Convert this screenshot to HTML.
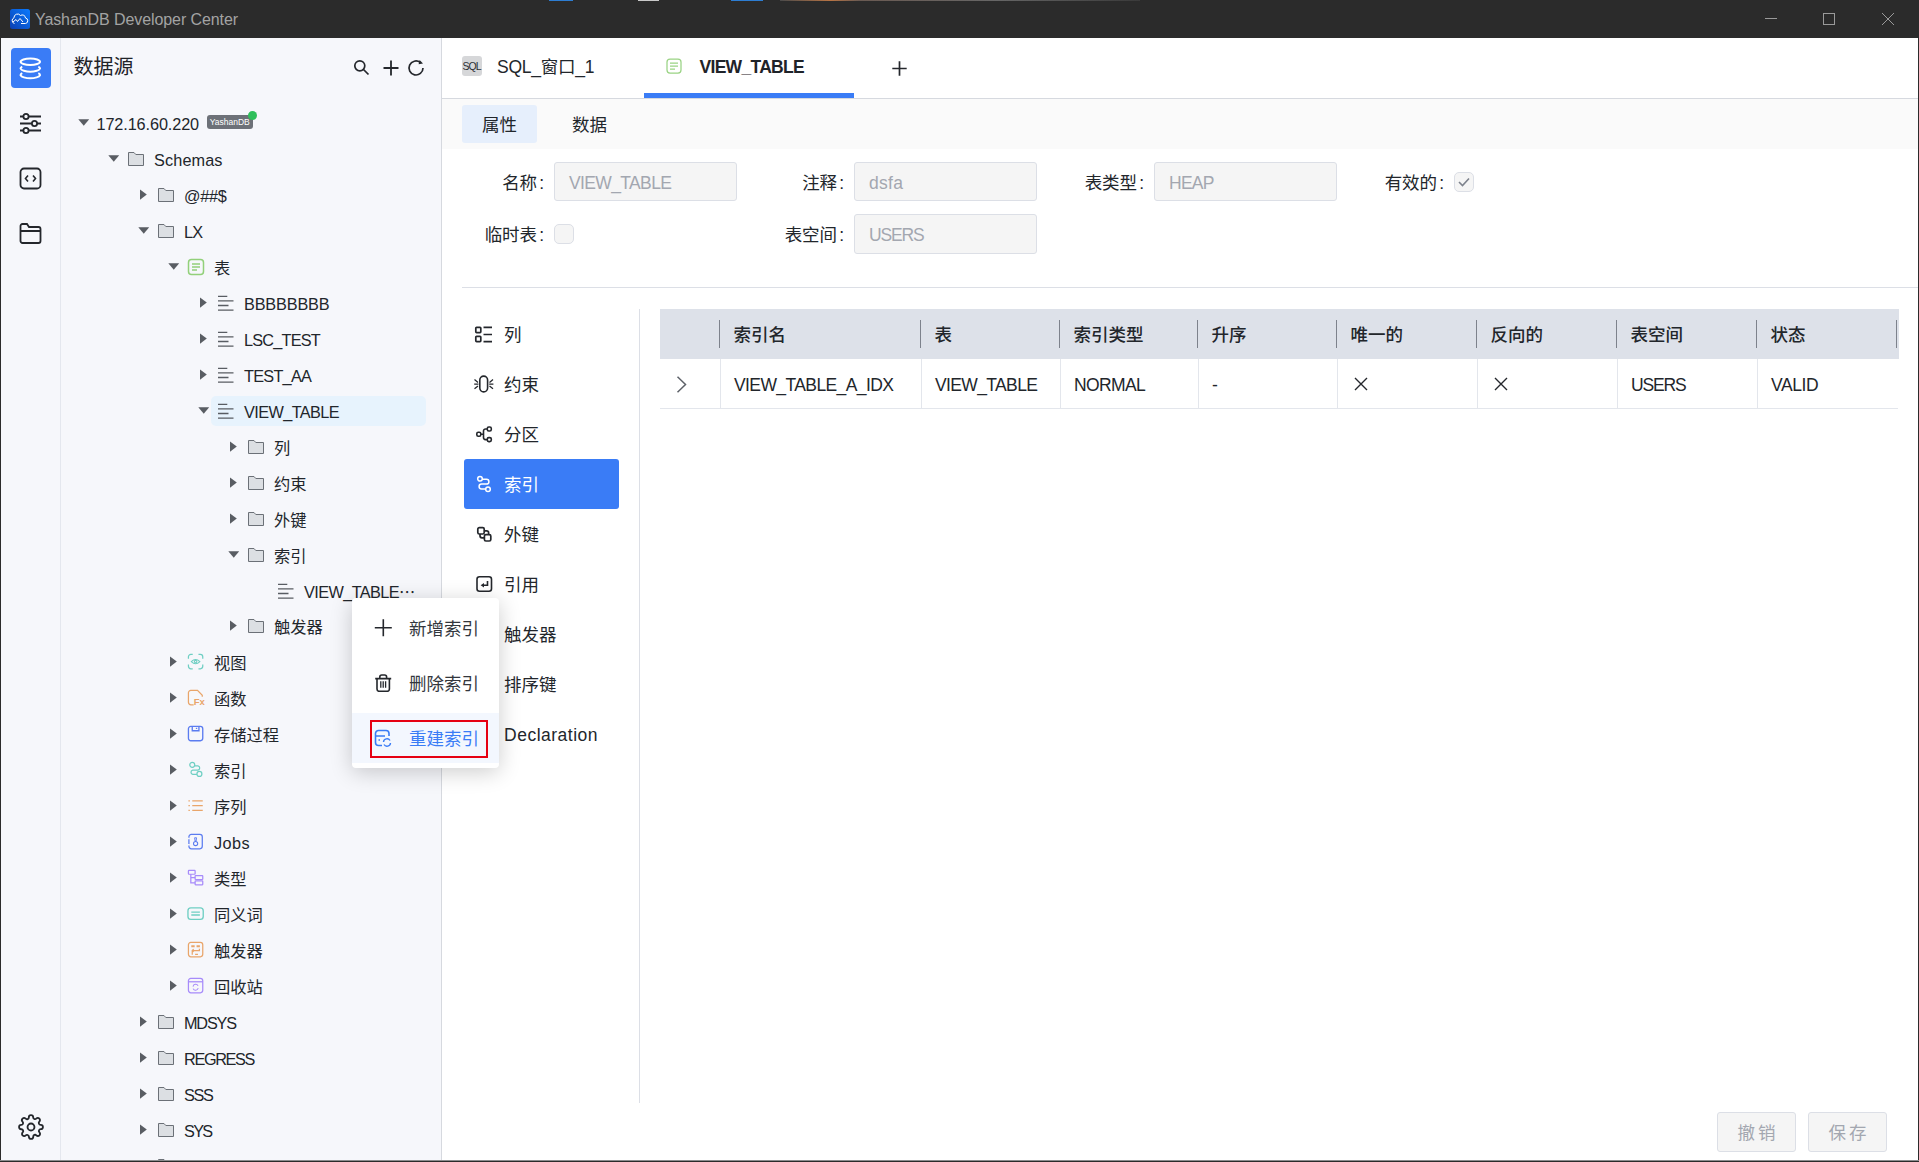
<!DOCTYPE html>
<html lang="zh-CN"><head><meta charset="utf-8"><title>YashanDB Developer Center</title>
<style>
*{box-sizing:border-box;margin:0;padding:0}
html,body{width:1919px;height:1162px;overflow:hidden;background:#fff}
body{font-family:"Liberation Sans","Noto Sans CJK SC",sans-serif;color:#1f2329;position:relative;font-size:16px}
.abs{position:absolute}
#titlebar{left:0;top:0;width:1919px;height:38px;background:#2b2b2b}
#titlebar .t{left:35px;top:0;height:38px;line-height:40px;color:#a3a3a3;font-size:16px;white-space:nowrap}
#strip{left:1px;top:38px;width:60px;height:1123px;background:#f6f7fb;border-right:1px solid #e4e7ee}
#tree{left:61px;top:38px;width:381px;height:1123px;background:#f6f7fb;border-right:1px solid #d6d9df;overflow:hidden}
#main{left:442px;top:38px;width:1476px;height:1123px;background:#fff;overflow:hidden}
.bl{left:0;top:0;width:1px;height:1162px;background:#2b2b2b}
.br{left:1918px;top:0;width:1px;height:1162px;background:#2b2b2b}
.bb{left:0;top:1160px;width:1919px;height:2px;background:linear-gradient(#8b8c8e 0 50%,#2b2b2b 50% 100%)}
.row{position:absolute;left:0;width:380px;height:36px;line-height:39px;font-size:16.25px;white-space:nowrap;color:#22262b}
.row .ar{position:absolute;top:0;width:12px;height:36px}
.row .ic{position:absolute;top:9px;width:18px;height:18px}
.row .ic.sm{top:9.4px;width:17.2px;height:17.2px;margin-left:0.4px}
.row .tx{position:absolute;top:0}
.nav{position:absolute;left:22px;width:155px;height:50px;line-height:53px;font-size:17.5px;color:#22262b;border-radius:3px;white-space:nowrap}
.nav svg{position:absolute;left:10px;top:15.6px;width:20px;height:20px}
.nav span.n{position:absolute;left:40px;top:0}
.nav.on{background:#3a7cf6;color:#fff}
.lbl{position:absolute;height:39px;line-height:42px;font-size:17.5px;text-align:right;color:#22262b;white-space:nowrap}
.lbl b{font-weight:normal;margin-left:2px}
.inp{position:absolute;height:39px;line-height:40px;font-size:17.5px;color:#a3a7b0;background:#f5f5f5;border:1px solid #dcdfe6;border-radius:3px;padding-left:14px;white-space:nowrap}
.cb{position:absolute;width:20px;height:20px;background:#f5f5f5;border:1px solid #dcdfe6;border-radius:5px}
.th{position:absolute;top:0;height:50px;line-height:53px;font-size:17.5px;font-weight:500;color:#22262b;padding-left:13.6px;white-space:nowrap}
.th i{position:absolute;left:0;top:11px;width:1px;height:28px;background:#7d828c}
.td{position:absolute;top:50px;height:50px;line-height:53px;font-size:17.5px;color:#22262b;padding-left:13px;border-left:1px solid #e3e6ec;white-space:nowrap}
.btn{position:absolute;top:1074px;width:79px;height:40px;line-height:41px;text-align:center;font-size:17.5px;color:#a3a7b0;background:#f5f5f5;border:1px solid #dcdfe6;border-radius:3px;letter-spacing:3px;padding-left:3px}
.mi{position:absolute;left:0;width:147px;height:50px;line-height:53px;font-size:17.5px;color:#33373d;white-space:nowrap}
.mi span{position:absolute;left:57px;top:0}
.mi svg{position:absolute;left:22px;top:16px;width:18px;height:18px}
</style></head><body>
<div id="titlebar" class="abs">
<svg class="abs" style="left:10px;top:9px;width:20px;height:20px" viewBox="0 0 20 20"><defs><linearGradient id="lg" x1="1" y1="0" x2="0" y2="1"><stop offset="0" stop-color="#0a7bff"/><stop offset="1" stop-color="#0b3fb0"/></linearGradient></defs><rect width="20" height="20" rx="2.5" fill="url(#lg)"/><path d="M4.5 14.5 A3 3 0 0 1 4 8.8 A3.6 3.6 0 0 1 10.5 6.5 A3.2 3.2 0 0 1 15.5 9 A2.8 2.8 0 0 1 15.5 14.5 H11 M3 13 L6 10.5 L7.5 12.5 L10 9.5 L13 13" fill="none" stroke="#fff" stroke-width="1"/></svg>
<div class="abs" style="left:549px;top:0;width:24px;height:1px;background:#2d7dd2"></div>
<div class="abs" style="left:638px;top:0;width:21px;height:1px;background:#c9c9c9"></div>
<div class="abs" style="left:731px;top:0;width:32px;height:1px;background:#2d7dd2"></div>
<div class="abs" style="left:780px;top:0;width:360px;height:1px;background:linear-gradient(90deg,#4a4a4a,#b87444 14%,#6a5a52 22%,#666 60%,#3a3a3a)"></div>
<div class="abs t"><span style="letter-spacing:-0.086px">YashanDB Developer Center</span></div>
<svg class="abs" style="left:1764px;top:12px;width:14px;height:14px" viewBox="0 0 14 14" stroke="#9a9a9a" stroke-width="1" fill="none"><path d="M1 6.5 H13"/></svg>
<svg class="abs" style="left:1822px;top:12px;width:14px;height:14px" viewBox="0 0 14 14" stroke="#9a9a9a" stroke-width="1" fill="none"><rect x="1.5" y="1.5" width="11" height="11"/></svg>
<svg class="abs" style="left:1881px;top:12px;width:14px;height:14px" viewBox="0 0 14 14" stroke="#9a9a9a" stroke-width="1" fill="none"><path d="M1 1 L13 13 M13 1 L1 13"/></svg>
</div>
<div id="strip" class="abs">
<div class="abs" style="left:10px;top:10px;width:40px;height:40px;border-radius:4px;background:#3a7cf6"></div>
<svg class="abs" style="left:18px;top:18px;width:24px;height:24px" viewBox="0 0 24 24" fill="none" stroke="#fff" stroke-width="2"><ellipse cx="11.3" cy="5.7" rx="9.7" ry="3.2"/><path d="M3.28 10.55 A9.7 3.2 0 1 0 19.32 10.55 M3.28 17.2 A9.7 3.2 0 1 0 19.32 17.2"/></svg>
<svg class="abs" style="left:18px;top:74px;width:23px;height:23px" viewBox="0 0 23 23" fill="none" stroke="#24272c" stroke-width="1.8"><path d="M1 4.5 H4.5 M9.5 4.5 H22 M1 11.5 H13 M18 11.5 H22 M1 18.5 H4.5 M9.5 18.5 H22"/><circle cx="7" cy="4.5" r="2.6"/><circle cx="15.5" cy="11.5" r="2.6"/><circle cx="7" cy="18.5" r="2.6"/></svg>
<svg class="abs" style="left:18px;top:129px;width:23px;height:23px" viewBox="0 0 23 23" fill="none" stroke="#24272c" stroke-width="1.8"><rect x="1.5" y="1.5" width="20" height="20" rx="3.5"/><path d="M9 8.5 L6.5 11.5 L9 14.5 M14 8.5 L16.5 11.5 L14 14.5" stroke-width="1.6"/></svg>
<svg class="abs" style="left:18px;top:184px;width:23px;height:23px" viewBox="0 0 23 23" fill="none" stroke="#24272c" stroke-width="1.8"><path d="M1.5 4 A2 2 0 0 1 3.5 2 H8 L10 5 H19.5 A2 2 0 0 1 21.5 7 V19 A2 2 0 0 1 19.5 21 H3.5 A2 2 0 0 1 1.5 19 Z M1.5 9 H21.5"/></svg>
<svg class="abs" style="left:17px;top:1076px;width:26px;height:26px" viewBox="0 0 24 24" fill="none" stroke="#24272c" stroke-width="1.7" stroke-linejoin="round"><circle cx="12" cy="12" r="3.2"/><path d="M19.4 15a1.65 1.65 0 0 0 .33 1.82l.06.06a2 2 0 1 1-2.83 2.83l-.06-.06a1.65 1.65 0 0 0-1.82-.33 1.65 1.65 0 0 0-1 1.51V21a2 2 0 0 1-4 0v-.09A1.65 1.65 0 0 0 9 19.4a1.65 1.65 0 0 0-1.82.33l-.06.06a2 2 0 1 1-2.83-2.83l.06-.06a1.65 1.65 0 0 0 .33-1.82 1.65 1.65 0 0 0-1.51-1H3a2 2 0 0 1 0-4h.09A1.65 1.65 0 0 0 4.6 9a1.65 1.65 0 0 0-.33-1.82l-.06-.06a2 2 0 1 1 2.83-2.83l.06.06a1.65 1.65 0 0 0 1.82.33H9a1.65 1.65 0 0 0 1-1.51V3a2 2 0 0 1 4 0v.09a1.65 1.65 0 0 0 1 1.51 1.65 1.65 0 0 0 1.82-.33l.06-.06a2 2 0 1 1 2.83 2.83l-.06.06a1.65 1.65 0 0 0-.33 1.82V9a1.65 1.65 0 0 0 1.51 1H21a2 2 0 0 1 0 4h-.09a1.65 1.65 0 0 0-1.51 1z"/></svg>
</div>
<div id="tree" class="abs">
<div class="abs" style="left:12.5px;top:13px;height:30px;line-height:33px;font-size:20px;color:#1f2329;white-space:nowrap">数据源</div>
<svg class="abs" style="left:292px;top:21px;width:17px;height:17px" viewBox="0 0 17 17" fill="none" stroke="#24272c" stroke-width="1.7"><circle cx="6.8" cy="6.8" r="5"/><path d="M10.5 10.5 L15.5 15.5"/></svg>
<svg class="abs" style="left:322px;top:22px;width:16px;height:16px" viewBox="0 0 16 16" fill="none" stroke="#24272c" stroke-width="1.8"><path d="M8 0.5 V15.5 M0.5 8 H15.5"/></svg>
<svg class="abs" style="left:346px;top:21px;width:18px;height:18px" viewBox="0 0 18 18" fill="none" stroke="#24272c" stroke-width="1.5"><path d="M16 9 A7 7 0 1 1 13.2 3.4" stroke-width="1.7"/><path d="M12.6 0.9 L16 4.4 L11.6 5.3 Z" fill="#24272c" stroke="none"/></svg>
<div class="row" style="top:67px"><svg class="ar" style="left:17px" viewBox="0 0 12 36"><path d="M0.3 14.2 L11.2 14.2 L5.75 20.8 Z" fill="#595d63"/></svg><span class="tx" style="left:35.5px"><span style="letter-spacing:-0.109px">172.16.60.220</span></span><span class="abs" style="left:146px;top:9.5px;width:45.5px;height:14px;line-height:15.5px;background:#6d7178;border-radius:3px;color:#fff;font-size:8.5px;text-align:center">YashanDB</span><span class="abs" style="left:187px;top:6px;width:9px;height:9px;border-radius:50%;background:#2fbf5b"></span></div>
<div class="row" style="top:103px"><svg class="ar" style="left:47px" viewBox="0 0 12 36"><path d="M0.3 14.2 L11.2 14.2 L5.75 20.8 Z" fill="#595d63"/></svg><svg class="ic" style="left:66px" viewBox="0 0 18 18"><path d="M1.5 2.5 H7 L8.8 4.5 H16.5 V15.5 H1.5 Z" fill="#dcdfe3" stroke="#6b7077" stroke-width="1"/></svg><span class="tx" style="left:93px"><span style="letter-spacing:0.127px">Schemas</span></span></div>
<div class="row" style="top:139px"><svg class="ar" style="left:77px" viewBox="0 0 12 36"><path d="M2 12.5 L8.8 17.6 L2 22.7 Z" fill="#595d63"/></svg><svg class="ic" style="left:96px" viewBox="0 0 18 18"><path d="M1.5 2.5 H7 L8.8 4.5 H16.5 V15.5 H1.5 Z" fill="#dcdfe3" stroke="#6b7077" stroke-width="1"/></svg><span class="tx" style="left:123px"><span style="letter-spacing:-0.293px">@##$</span></span></div>
<div class="row" style="top:175px"><svg class="ar" style="left:77px" viewBox="0 0 12 36"><path d="M0.3 14.2 L11.2 14.2 L5.75 20.8 Z" fill="#595d63"/></svg><svg class="ic" style="left:96px" viewBox="0 0 18 18"><path d="M1.5 2.5 H7 L8.8 4.5 H16.5 V15.5 H1.5 Z" fill="#dcdfe3" stroke="#6b7077" stroke-width="1"/></svg><span class="tx" style="left:123px"><span style="letter-spacing:-0.875px">LX</span></span></div>
<div class="row" style="top:211px"><svg class="ar" style="left:107px" viewBox="0 0 12 36"><path d="M0.3 14.2 L11.2 14.2 L5.75 20.8 Z" fill="#595d63"/></svg><svg class="ic" style="left:126px" viewBox="0 0 18 18"><rect x="1.5" y="1.5" width="15" height="15" rx="3" fill="none" stroke="#92d07a" stroke-width="1.5"/><path d="M5 6 H13 M5 9 H13 M5 12 H10" stroke="#92d07a" stroke-width="1.4" fill="none"/></svg><span class="tx" style="left:153px">表</span></div>
<div class="row" style="top:247px"><svg class="ar" style="left:137px" viewBox="0 0 12 36"><path d="M2 12.5 L8.8 17.6 L2 22.7 Z" fill="#595d63"/></svg><svg class="ic" style="left:156px" viewBox="0 0 18 18"><path d="M1 2.3 H10.3 M1 6.9 H16.5 M1 11.5 H11.5 M1 16.1 H16.5" stroke="#595d63" stroke-width="1.3" fill="none"/></svg><span class="tx" style="left:183px"><span style="letter-spacing:-0.162px">BBBBBBBB</span></span></div>
<div class="row" style="top:283px"><svg class="ar" style="left:137px" viewBox="0 0 12 36"><path d="M2 12.5 L8.8 17.6 L2 22.7 Z" fill="#595d63"/></svg><svg class="ic" style="left:156px" viewBox="0 0 18 18"><path d="M1 2.3 H10.3 M1 6.9 H16.5 M1 11.5 H11.5 M1 16.1 H16.5" stroke="#595d63" stroke-width="1.3" fill="none"/></svg><span class="tx" style="left:183px"><span style="letter-spacing:-0.783px">LSC_TEST</span></span></div>
<div class="row" style="top:319px"><svg class="ar" style="left:137px" viewBox="0 0 12 36"><path d="M2 12.5 L8.8 17.6 L2 22.7 Z" fill="#595d63"/></svg><svg class="ic" style="left:156px" viewBox="0 0 18 18"><path d="M1 2.3 H10.3 M1 6.9 H16.5 M1 11.5 H11.5 M1 16.1 H16.5" stroke="#595d63" stroke-width="1.3" fill="none"/></svg><span class="tx" style="left:183px"><span style="letter-spacing:-0.734px">TEST_AA</span></span></div>
<div class="row" style="top:355px"><div class="abs" style="left:150px;top:3px;width:215px;height:30px;background:#e7f3fd;border-radius:5px"></div><svg class="ar" style="left:137px" viewBox="0 0 12 36"><path d="M0.3 14.2 L11.2 14.2 L5.75 20.8 Z" fill="#595d63"/></svg><svg class="ic" style="left:156px" viewBox="0 0 18 18"><path d="M1 2.3 H10.3 M1 6.9 H16.5 M1 11.5 H11.5 M1 16.1 H16.5" stroke="#595d63" stroke-width="1.3" fill="none"/></svg><span class="tx" style="left:183px"><span style="letter-spacing:-0.586px">VIEW_TABLE</span></span></div>
<div class="row" style="top:391px"><svg class="ar" style="left:167px" viewBox="0 0 12 36"><path d="M2 12.5 L8.8 17.6 L2 22.7 Z" fill="#595d63"/></svg><svg class="ic" style="left:186px" viewBox="0 0 18 18"><path d="M1.5 2.5 H7 L8.8 4.5 H16.5 V15.5 H1.5 Z" fill="#dcdfe3" stroke="#6b7077" stroke-width="1"/></svg><span class="tx" style="left:213px">列</span></div>
<div class="row" style="top:427px"><svg class="ar" style="left:167px" viewBox="0 0 12 36"><path d="M2 12.5 L8.8 17.6 L2 22.7 Z" fill="#595d63"/></svg><svg class="ic" style="left:186px" viewBox="0 0 18 18"><path d="M1.5 2.5 H7 L8.8 4.5 H16.5 V15.5 H1.5 Z" fill="#dcdfe3" stroke="#6b7077" stroke-width="1"/></svg><span class="tx" style="left:213px">约束</span></div>
<div class="row" style="top:463px"><svg class="ar" style="left:167px" viewBox="0 0 12 36"><path d="M2 12.5 L8.8 17.6 L2 22.7 Z" fill="#595d63"/></svg><svg class="ic" style="left:186px" viewBox="0 0 18 18"><path d="M1.5 2.5 H7 L8.8 4.5 H16.5 V15.5 H1.5 Z" fill="#dcdfe3" stroke="#6b7077" stroke-width="1"/></svg><span class="tx" style="left:213px">外键</span></div>
<div class="row" style="top:499px"><svg class="ar" style="left:167px" viewBox="0 0 12 36"><path d="M0.3 14.2 L11.2 14.2 L5.75 20.8 Z" fill="#595d63"/></svg><svg class="ic" style="left:186px" viewBox="0 0 18 18"><path d="M1.5 2.5 H7 L8.8 4.5 H16.5 V15.5 H1.5 Z" fill="#dcdfe3" stroke="#6b7077" stroke-width="1"/></svg><span class="tx" style="left:213px">索引</span></div>
<div class="row" style="top:535px"><svg class="ic" style="left:216px" viewBox="0 0 18 18"><path d="M1 2.3 H10.3 M1 6.9 H16.5 M1 11.5 H11.5 M1 16.1 H16.5" stroke="#595d63" stroke-width="1.3" fill="none"/></svg><span class="tx" style="left:243px"><span style="letter-spacing:-0.586px">VIEW_TABLE</span>⋯</span></div>
<div class="row" style="top:570px"><svg class="ar" style="left:167px" viewBox="0 0 12 36"><path d="M2 12.5 L8.8 17.6 L2 22.7 Z" fill="#595d63"/></svg><svg class="ic" style="left:186px" viewBox="0 0 18 18"><path d="M1.5 2.5 H7 L8.8 4.5 H16.5 V15.5 H1.5 Z" fill="#dcdfe3" stroke="#6b7077" stroke-width="1"/></svg><span class="tx" style="left:213px">触发器</span></div>
<div class="row" style="top:606px"><svg class="ar" style="left:107px" viewBox="0 0 12 36"><path d="M2 12.5 L8.8 17.6 L2 22.7 Z" fill="#595d63"/></svg><svg class="ic sm" style="left:126px" viewBox="0 0 18 18" fill="none" stroke="#6fcfc3" stroke-width="1.3"><path d="M1.5 6 V4 A2.5 2.5 0 0 1 4 1.5 H6 M12 1.5 H14 A2.5 2.5 0 0 1 16.5 4 V6 M16.5 12 V14 A2.5 2.5 0 0 1 14 16.5 H12 M6 16.5 H4 A2.5 2.5 0 0 1 1.5 14 V12"/><path d="M4.5 9 Q9 4.5 13.5 9 Q9 13.5 4.5 9 Z" stroke-width="1.1"/><circle cx="9" cy="9" r="1.3" stroke-width="1.1"/></svg><span class="tx" style="left:153px">视图</span></div>
<div class="row" style="top:642px"><svg class="ar" style="left:107px" viewBox="0 0 12 36"><path d="M2 12.5 L8.8 17.6 L2 22.7 Z" fill="#595d63"/></svg><svg class="ic sm" style="left:126px" viewBox="0 0 18 18" fill="none" stroke="#e9a56a" stroke-width="1.3"><path d="M7 16.5 H4 A2.5 2.5 0 0 1 1.5 14 V4 A2.5 2.5 0 0 1 4 1.5 H11 L16 6.5 V8"/><text x="7" y="16.8" font-size="10" font-weight="bold" fill="#e9a56a" stroke="none" font-family="Liberation Sans,sans-serif">Fx</text></svg><span class="tx" style="left:153px">函数</span></div>
<div class="row" style="top:678px"><svg class="ar" style="left:107px" viewBox="0 0 12 36"><path d="M2 12.5 L8.8 17.6 L2 22.7 Z" fill="#595d63"/></svg><svg class="ic sm" style="left:126px" viewBox="0 0 18 18" fill="none" stroke="#5b7cf0" stroke-width="1.4"><rect x="1.5" y="1.5" width="15" height="15" rx="2.5"/><path d="M5.5 1.5 V6 H12.5 V1.5 M10 3 V4.2"/></svg><span class="tx" style="left:153px">存储过程</span></div>
<div class="row" style="top:714px"><svg class="ar" style="left:107px" viewBox="0 0 12 36"><path d="M2 12.5 L8.8 17.6 L2 22.7 Z" fill="#595d63"/></svg><svg class="ic sm" style="left:126px" viewBox="0 0 18 18" fill="none" stroke="#6fcfc3" stroke-width="1.3"><circle cx="5.5" cy="4" r="2.6"/><circle cx="13" cy="13.5" r="2.6"/><path d="M8 5 H11.5 A2.3 2.3 0 0 1 11.5 9.5 H6 A2.3 2.3 0 0 0 6 14 H10.4"/></svg><span class="tx" style="left:153px">索引</span></div>
<div class="row" style="top:750px"><svg class="ar" style="left:107px" viewBox="0 0 12 36"><path d="M2 12.5 L8.8 17.6 L2 22.7 Z" fill="#595d63"/></svg><svg class="ic sm" style="left:126px" viewBox="0 0 18 18" fill="none" stroke="#e9a56a" stroke-width="1.3"><path d="M5.5 4 H16.5 M5.5 9 H16.5 M5.5 14 H16.5 M1.5 4 H3 M1.5 9 H3 M1.5 14 H3"/></svg><span class="tx" style="left:153px">序列</span></div>
<div class="row" style="top:786px"><svg class="ar" style="left:107px" viewBox="0 0 12 36"><path d="M2 12.5 L8.8 17.6 L2 22.7 Z" fill="#595d63"/></svg><svg class="ic sm" style="left:126px" viewBox="0 0 18 18" fill="none" stroke="#5b7cf0" stroke-width="1.3"><rect x="2" y="1.5" width="14" height="15" rx="2.5"/><path d="M2 5 V6.5 M2 11.5 V13" stroke="#f6f7fb" stroke-width="2"/><circle cx="9" cy="11" r="2.2" stroke-width="1.1"/><path d="M8 5 H10 L9.5 8.5 H8.5 Z" stroke-width="1"/></svg><span class="tx" style="left:153px"><span style="letter-spacing:0.469px">Jobs</span></span></div>
<div class="row" style="top:822px"><svg class="ar" style="left:107px" viewBox="0 0 12 36"><path d="M2 12.5 L8.8 17.6 L2 22.7 Z" fill="#595d63"/></svg><svg class="ic sm" style="left:126px" viewBox="0 0 18 18" fill="none" stroke="#a78bfa" stroke-width="1.3"><rect x="1.5" y="1.5" width="7" height="4" rx="0.5"/><rect x="8.5" y="7" width="8" height="4" rx="0.5"/><rect x="8.5" y="12.5" width="8" height="4" rx="0.5"/><path d="M4 5.5 V14.5 H8.5 M4 9 H8.5"/></svg><span class="tx" style="left:153px">类型</span></div>
<div class="row" style="top:858px"><svg class="ar" style="left:107px" viewBox="0 0 12 36"><path d="M2 12.5 L8.8 17.6 L2 22.7 Z" fill="#595d63"/></svg><svg class="ic sm" style="left:126px" viewBox="0 0 18 18" fill="none" stroke="#6fcfc3" stroke-width="1.4"><rect x="1" y="3" width="16" height="12" rx="3"/><path d="M4.5 7.5 H13.5 M4.5 10.5 H13.5"/></svg><span class="tx" style="left:153px">同义词</span></div>
<div class="row" style="top:894px"><svg class="ar" style="left:107px" viewBox="0 0 12 36"><path d="M2 12.5 L8.8 17.6 L2 22.7 Z" fill="#595d63"/></svg><svg class="ic sm" style="left:126px" viewBox="0 0 18 18" fill="none" stroke="#e9a56a" stroke-width="1.3"><rect x="1.5" y="1.5" width="15" height="15" rx="2.5"/><path d="M4.5 5.5 H8 M10 5.5 H13.5" stroke-width="2.2"/><path d="M13 8 V10 H5.5 V14.5 M5.5 10 L7 8.7 M5.5 10 L7 11.3 M8.5 14 H11.5"/></svg><span class="tx" style="left:153px">触发器</span></div>
<div class="row" style="top:930px"><svg class="ar" style="left:107px" viewBox="0 0 12 36"><path d="M2 12.5 L8.8 17.6 L2 22.7 Z" fill="#595d63"/></svg><svg class="ic sm" style="left:126px" viewBox="0 0 18 18" fill="none" stroke="#a78bfa" stroke-width="1.3"><rect x="1.5" y="1.5" width="15" height="15" rx="2.5"/><path d="M1.5 5 H16.5"/><path d="M6.3 10 A2.8 2.8 0 0 1 11.6 9.3 M11.7 11.5 A2.8 2.8 0 0 1 6.4 12.2" stroke-width="1.1"/></svg><span class="tx" style="left:153px">回收站</span></div>
<div class="row" style="top:966px"><svg class="ar" style="left:77px" viewBox="0 0 12 36"><path d="M2 12.5 L8.8 17.6 L2 22.7 Z" fill="#595d63"/></svg><svg class="ic" style="left:96px" viewBox="0 0 18 18"><path d="M1.5 2.5 H7 L8.8 4.5 H16.5 V15.5 H1.5 Z" fill="#dcdfe3" stroke="#6b7077" stroke-width="1"/></svg><span class="tx" style="left:123px"><span style="letter-spacing:-1.191px">MDSYS</span></span></div>
<div class="row" style="top:1002px"><svg class="ar" style="left:77px" viewBox="0 0 12 36"><path d="M2 12.5 L8.8 17.6 L2 22.7 Z" fill="#595d63"/></svg><svg class="ic" style="left:96px" viewBox="0 0 18 18"><path d="M1.5 2.5 H7 L8.8 4.5 H16.5 V15.5 H1.5 Z" fill="#dcdfe3" stroke="#6b7077" stroke-width="1"/></svg><span class="tx" style="left:123px"><span style="letter-spacing:-1.337px">REGRESS</span></span></div>
<div class="row" style="top:1038px"><svg class="ar" style="left:77px" viewBox="0 0 12 36"><path d="M2 12.5 L8.8 17.6 L2 22.7 Z" fill="#595d63"/></svg><svg class="ic" style="left:96px" viewBox="0 0 18 18"><path d="M1.5 2.5 H7 L8.8 4.5 H16.5 V15.5 H1.5 Z" fill="#dcdfe3" stroke="#6b7077" stroke-width="1"/></svg><span class="tx" style="left:123px"><span style="letter-spacing:-1.318px">SSS</span></span></div>
<div class="row" style="top:1074px"><svg class="ar" style="left:77px" viewBox="0 0 12 36"><path d="M2 12.5 L8.8 17.6 L2 22.7 Z" fill="#595d63"/></svg><svg class="ic" style="left:96px" viewBox="0 0 18 18"><path d="M1.5 2.5 H7 L8.8 4.5 H16.5 V15.5 H1.5 Z" fill="#dcdfe3" stroke="#6b7077" stroke-width="1"/></svg><span class="tx" style="left:123px"><span style="letter-spacing:-1.688px">SYS</span></span></div>
<div class="row" style="top:1110px"><svg class="ar" style="left:77px" viewBox="0 0 12 36"><path d="M2 12.5 L8.8 17.6 L2 22.7 Z" fill="#595d63"/></svg><svg class="ic" style="left:96px" viewBox="0 0 18 18"><path d="M1.5 2.5 H7 L8.8 4.5 H16.5 V15.5 H1.5 Z" fill="#dcdfe3" stroke="#6b7077" stroke-width="1"/></svg><span class="tx" style="left:123px"></span></div></div>
<div id="main" class="abs">
<div class="abs" style="left:0;top:60px;width:1476px;height:1px;background:#d6d9df"></div>
<div class="abs" style="left:20px;top:18px;width:20px;height:20px;border-radius:3px;background:#d6d7d9;color:#2b2f36;font-size:10.5px;line-height:20px;text-align:center;letter-spacing:-1px;text-indent:-1px">SQL</div>
<div class="abs" style="left:55px;top:10px;height:38px;line-height:39px;font-size:17.5px;color:#22262b;white-space:nowrap"><span style="letter-spacing:-0.252px">SQL_窗口_1</span></div>
<svg class="abs" style="left:224px;top:20px;width:16px;height:16px" viewBox="0 0 16 16" fill="none" stroke="#9ad384" stroke-width="1.25"><rect x="1" y="1" width="14" height="14" rx="3"/><path d="M4 5 H12 M4 8 H12 M4 11 H9"/></svg>
<div class="abs" style="left:257.5px;top:10px;height:38px;line-height:39px;font-size:17.5px;font-weight:bold;color:#1f2329;white-space:nowrap"><span style="letter-spacing:-0.698px">VIEW_TABLE</span></div>
<div class="abs" style="left:202px;top:55px;width:210px;height:5px;background:#3a7cf6"></div>
<svg class="abs" style="left:450px;top:23px;width:15px;height:15px" viewBox="0 0 15 15" fill="none" stroke="#24272c" stroke-width="1.7"><path d="M7.5 0.3 V14.7 M0.3 7.5 H14.7"/></svg>
<div class="abs" style="left:0;top:61px;width:1476px;height:50px;background:#fafafa"></div>
<div class="abs" style="left:20px;top:67px;width:75px;height:38px;line-height:41px;background:#e6effc;border-radius:3px;text-align:center;font-size:17.5px;color:#22262b">属性</div>
<div class="abs" style="left:110px;top:67px;width:75px;height:38px;line-height:41px;text-align:center;font-size:17.5px;color:#22262b">数据</div>
<div class="lbl" style="left:0px;width:102px;top:124px">名称<b>:</b></div>
<div class="inp" style="left:112px;top:124px;width:183px"><span style="letter-spacing:-0.631px">VIEW_TABLE</span></div>
<div class="lbl" style="left:300px;width:102px;top:124px">注释<b>:</b></div>
<div class="inp" style="left:412px;top:124px;width:183px"><span style="letter-spacing:0.281px">dsfa</span></div>
<div class="lbl" style="left:600px;width:102px;top:124px">表类型<b>:</b></div>
<div class="inp" style="left:712px;top:124px;width:183px"><span style="letter-spacing:-0.723px">HEAP</span></div>
<div class="lbl" style="left:900px;width:102px;top:124px">有效的<b>:</b></div>
<div class="cb" style="left:1012px;top:134px"><svg style="position:absolute;left:3px;top:4px;width:12px;height:10px" viewBox="0 0 12 10" fill="none" stroke="#7d828c" stroke-width="1.6"><path d="M1 5 L4.5 8.5 L11 1.5"/></svg></div>
<div class="lbl" style="left:0px;width:102px;top:176px">临时表<b>:</b></div>
<div class="cb" style="left:112px;top:186px"></div>
<div class="lbl" style="left:300px;width:102px;top:176px">表空间<b>:</b></div>
<div class="inp" style="left:412px;top:176px;width:183px;height:40px;line-height:41px"><span style="letter-spacing:-1.169px">USERS</span></div>
<div class="abs" style="left:20px;top:249px;width:1456px;height:1px;background:#dcdfe6"></div>
<div class="nav" style="top:271px"><svg viewBox="0 0 20 20" fill="none" stroke="#24272c" stroke-width="1.7"><rect x="1.8" y="2.3" width="5" height="5.3" rx="0.8"/><rect x="1.8" y="11.3" width="5" height="5.3" rx="0.8"/><path d="M9.5 2.4 H18 M9.5 9.5 H18 M9.5 16.6 H18"/></svg><span class="n">列</span></div>
<div class="nav" style="top:321px"><svg viewBox="0 0 20 20" fill="none" stroke="#24272c" stroke-width="1.6"><rect x="5.8" y="1.1" width="7.8" height="15.8" rx="3.9"/><path d="M0.5 4.6 L4 7.4 M0.2 9.2 H4.4 M0.5 13.8 L4 11 M19 4.6 L15.5 7.4 M19.4 9.2 H15.2 M19 13.8 L15.5 11" stroke-width="1.3"/></svg><span class="n">约束</span></div>
<div class="nav" style="top:371px"><svg viewBox="0 0 20 20" fill="none" stroke="#24272c" stroke-width="1.6"><rect x="2.8" y="7.2" width="4" height="4" rx="1.5"/><rect x="13.3" y="2" width="4" height="4" rx="1.5"/><rect x="13.3" y="12.6" width="4" height="4" rx="1.5"/><path d="M6.8 9.2 H9.5 M13.3 4 H11.5 A2 2 0 0 0 9.5 6 V12.6 A2 2 0 0 0 11.5 14.6 H13.3"/></svg><span class="n">分区</span></div>
<div class="nav on" style="top:421px"><svg viewBox="0 0 20 20" fill="none" stroke="#fff" stroke-width="1.5"><circle cx="6" cy="3.8" r="2.3"/><circle cx="14" cy="14.2" r="2.3"/><path d="M8.3 4.3 H12.5 A2.4 2.4 0 0 1 12.5 9.1 H7.5 A2.4 2.4 0 0 0 7.5 13.9 H11.7"/></svg><span class="n">索引</span></div>
<div class="nav" style="top:471px"><svg viewBox="0 0 20 20" fill="none" stroke="#24272c" stroke-width="1.7"><rect x="3.8" y="2.6" width="6.4" height="6.4" rx="1.5"/><rect x="10.4" y="9.6" width="6.4" height="6.4" rx="1.5"/><path d="M10.2 5.8 H12.6 A2 2 0 0 1 14.6 7.8 V9.6 M10.4 12.8 H8 A2 2 0 0 1 6 10.8 V9"/></svg><span class="n">外键</span></div>
<div class="nav" style="top:521px"><svg viewBox="0 0 20 20" fill="none" stroke="#24272c" stroke-width="1.6"><rect x="3" y="1.8" width="14.5" height="14.5" rx="2.5"/><path d="M13.5 6 V10.3 H9"/><path d="M6.6 10.3 L10 8 V12.6 Z" fill="#24272c" stroke="none"/></svg><span class="n">引用</span></div>
<div class="nav" style="top:571px"><span class="n">触发器</span></div>
<div class="nav" style="top:621px"><span class="n">排序键</span></div>
<div class="nav" style="top:671px"><span class="n"><span style="letter-spacing:0.506px">Declaration</span></span></div>
<div class="abs" style="left:197px;top:271px;width:1px;height:794px;background:#dcdfe6"></div>
<div class="abs" style="left:218px;top:271px;width:1239px;height:100px"><div class="abs" style="left:0;top:0;width:1239px;height:50px;background:#dde1e9"></div><div class="abs" style="left:0;top:99px;width:1238px;height:1px;background:#e3e6ec"></div><div class="th" style="left:0px;width:60px"><i style="left:59px"></i></div><div class="td" style="left:0px;width:60px;border-left:none"><svg style="position:absolute;left:16px;top:17px;width:11px;height:17px" viewBox="0 0 11 17" fill="none" stroke="#5d6168" stroke-width="1.5"><path d="M1.5 0.8 L9.5 8.5 L1.5 16.2"/></svg></div><div class="th" style="left:60px;width:201px">索引名<i style="left:200px"></i></div><div class="td" style="left:60px;width:201px"><span style="letter-spacing:-0.598px">VIEW_TABLE_A_IDX</span></div><div class="th" style="left:261px;width:139px">表<i style="left:138px"></i></div><div class="td" style="left:261px;width:139px"><span style="letter-spacing:-0.631px">VIEW_TABLE</span></div><div class="th" style="left:400px;width:138px">索引类型<i style="left:137px"></i></div><div class="td" style="left:400px;width:138px"><span style="letter-spacing:-0.628px">NORMAL</span></div><div class="th" style="left:538px;width:139px">升序<i style="left:138px"></i></div><div class="td" style="left:538px;width:139px"><span style="letter-spacing:0.25px">-</span></div><div class="th" style="left:677px;width:140px">唯一的<i style="left:139px"></i></div><div class="td" style="left:677px;width:140px"><svg style="position:absolute;left:16px;top:18px;width:14px;height:14px" viewBox="0 0 14 14" stroke="#24272c" stroke-width="1.4"><path d="M1 1 L13 13 M13 1 L1 13"/></svg></div><div class="th" style="left:817px;width:140px">反向的<i style="left:139px"></i></div><div class="td" style="left:817px;width:140px"><svg style="position:absolute;left:16px;top:18px;width:14px;height:14px" viewBox="0 0 14 14" stroke="#24272c" stroke-width="1.4"><path d="M1 1 L13 13 M13 1 L1 13"/></svg></div><div class="th" style="left:957px;width:140px">表空间<i style="left:139px"></i></div><div class="td" style="left:957px;width:140px"><span style="letter-spacing:-1.169px">USERS</span></div><div class="th" style="left:1097px;width:140px">状态<i style="left:139px"></i></div><div class="td" style="left:1097px;width:140px"><span style="letter-spacing:-0.431px">VALID</span></div></div>
<div class="btn" style="left:1275px">撤销</div>
<div class="btn" style="left:1366px">保存</div>
</div>

<div class="abs" style="left:352px;top:598px;width:147px;height:170px;background:#fff;border-radius:4px;box-shadow:0 4px 22px rgba(0,0,0,0.2)">
<div class="mi" style="top:5px"><svg viewBox="0 0 18 18" fill="none" stroke="#24272c" stroke-width="1.6"><path d="M9.3 0.3 V17.3 M0.8 8.8 H17.8"/></svg><span>新增索引</span></div>
<div class="mi" style="top:60px"><svg viewBox="0 0 18 18" fill="none" stroke="#24272c" stroke-width="1.6"><path d="M1.2 4.6 H17.2 M5.8 4.4 V3 A2 2 0 0 1 7.8 1 H10.6 A2 2 0 0 1 12.6 3 V4.4 M3 4.8 V15 A2.3 2.3 0 0 0 5.3 17.3 H13.1 A2.3 2.3 0 0 0 15.4 15 V4.8"/><path d="M6.8 7.2 V13.8 M9.2 7.2 V13.8 M11.6 7.2 V13.8" stroke-width="1.3"/></svg><span>删除索引</span></div>
<div class="mi" style="top:115px;background:#f3f7fe;color:#3a7cf6"><svg viewBox="0 0 18 18" fill="none" stroke="#3a7cf6" stroke-width="1.6"><path d="M8 16.5 H4.5 A3 3 0 0 1 1.5 13.5 V4.5 A3 3 0 0 1 4.5 1.5 H12 A3 3 0 0 1 15 4.5 V7 M1.5 7 H11 M4.5 11 H6"/><path d="M9.5 13 A3.5 3.5 0 0 1 16 11.5 M16.5 14 A3.5 3.5 0 0 1 10 15.5" stroke-width="1.4"/></svg><span>重建索引</span></div>
<div class="abs" style="left:18px;top:122px;width:118px;height:38px;border:2px solid #e60012"></div>
</div>

<div class="abs bl"></div><div class="abs br"></div><div class="abs bb"></div>
</body></html>
